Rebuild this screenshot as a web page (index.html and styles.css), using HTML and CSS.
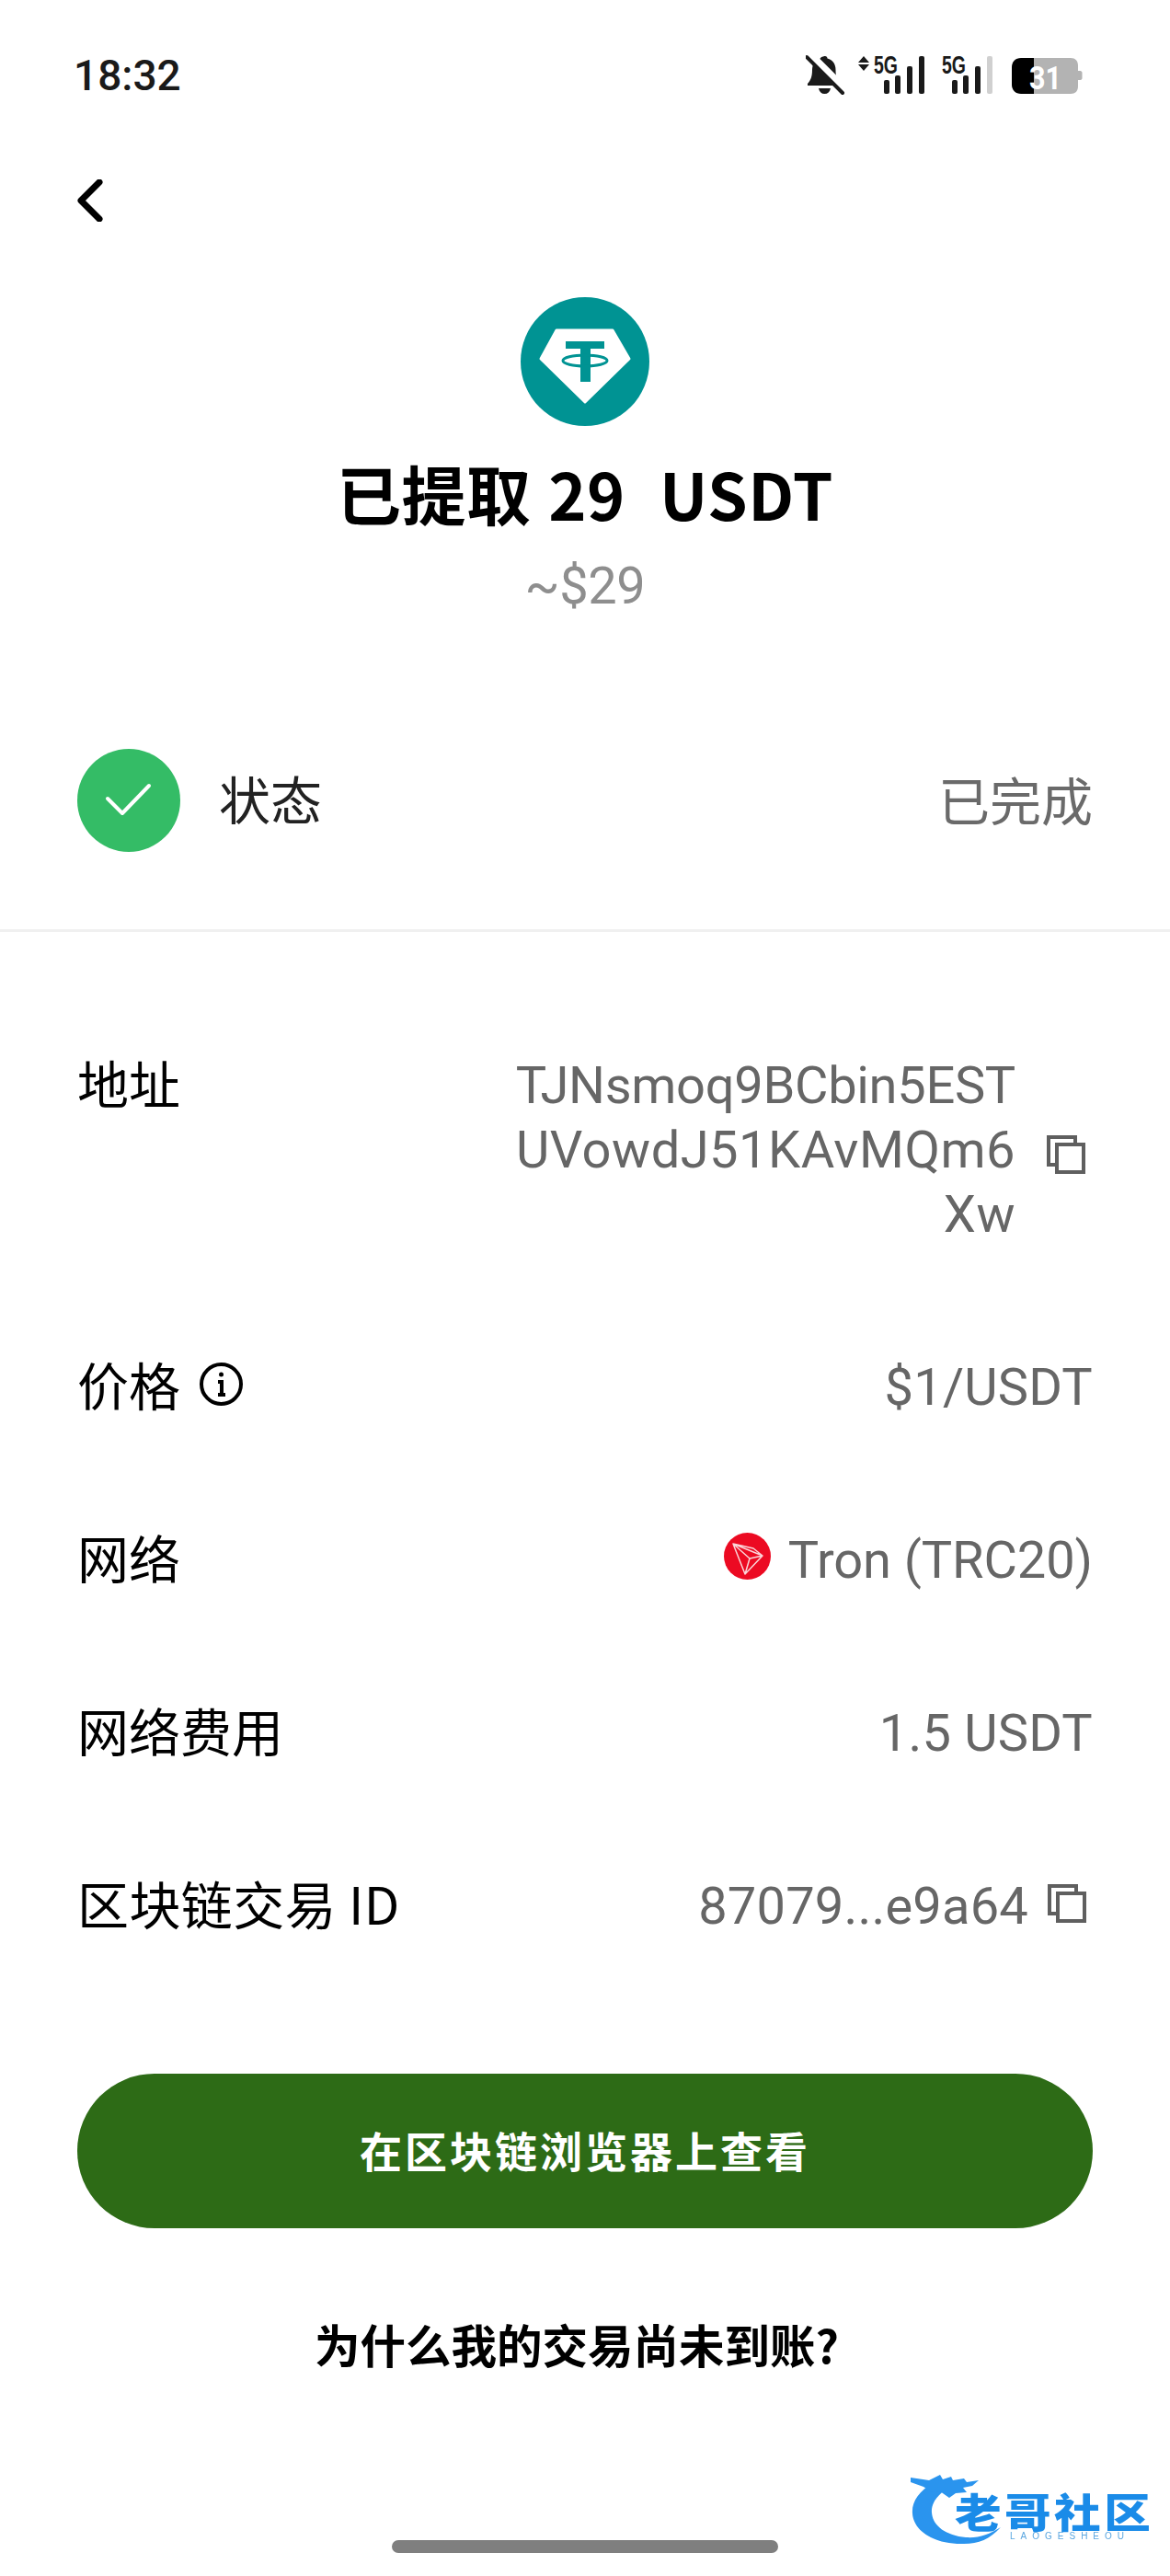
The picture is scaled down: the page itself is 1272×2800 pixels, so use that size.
FILE: index.html
```html
<!DOCTYPE html>
<html lang="zh">
<head>
<meta charset="utf-8">
<link rel="stylesheet" href="styles.css">
</head>
<body>
<div class="page">
  <header class="status-bar">
    <span class="time">18:32</span>
    <svg class="status-icons" width="301" height="50" viewBox="0 0 301 50">
      <path class="ic" d="M21 6c1.500 0 2.500 1 2.500 2.500 6 1.500 9 6.500 9 12.500 0 7 1.500 11 5 15v2H2v-2c3.500-4 5-8 5-15 0-6 3-11 9-12.500C16 7 19.500 6 21 6z"/>
      <path class="ic" d="M14 41h13c-1 4-3 6-6.500 6S15 45 14 41z"/>
      <path class="slash-bg" d="M1 7 40 46"/>
      <path class="slash" d="M1 7 40 46"/>
      <path class="ic" d="M63 6l6 7H57zM63 22l6-7H57z"/>
      <text class="tag" x="74" y="25" textLength="26" lengthAdjust="spacingAndGlyphs">5G</text>
      <rect class="ic" x="85" y="32" width="6" height="15" rx="2"/>
      <rect class="ic" x="97" y="27" width="6" height="20" rx="2"/>
      <rect class="ic" x="110" y="17" width="6" height="30" rx="2"/>
      <rect class="ic" x="123" y="6" width="6" height="41" rx="2"/>
      <text class="tag" x="148" y="25" textLength="26" lengthAdjust="spacingAndGlyphs">5G</text>
      <rect class="ic" x="159" y="32" width="6" height="15" rx="2"/>
      <rect class="ic" x="171" y="27" width="6" height="20" rx="2"/>
      <rect class="ic" x="184" y="17" width="6" height="30" rx="2"/>
      <rect class="off" x="197" y="6" width="6" height="41" rx="2"/>
      <path class="batt-bg" d="M236 8h52c5 0 8 3 8 8v6h2.500c1 0 2 1 2 2v6c0 1-1 2-2 2H296v7c0 5-3 8-8 8h-52z"/>
      <path class="batt-fill" d="M248 8v39h-14c-6 0-10-4-10-10V18c0-6 4-10 10-10z"/>
      <text class="batt-num" x="243" y="42" textLength="35" lengthAdjust="spacingAndGlyphs">31</text>
    </svg>
  </header>

  <nav class="nav">
    <svg class="back" width="28" height="46" viewBox="0 0 28 46"><path d="M24 3 4 23l20 20"/></svg>
  </nav>

  <section class="hero">
    <svg class="coin" width="140" height="140" viewBox="0 0 140 140">
      <circle class="coin-bg" cx="70" cy="70" r="70"/>
      <path class="gem" d="M39 36h61l18 31-48 47-48-47z"/>
      <path class="coin-t" d="M49 48h42v8H76v36H65V56H49z"/>
      <ellipse class="coin-ring" cx="70" cy="69" rx="24" ry="6"/>
    </svg>
    <h1 class="title">已提取 29  USDT</h1>
    <p class="fiat">~$29</p>
  </section>

  <section class="state">
    <div class="state-left">
      <svg class="check" width="112" height="112" viewBox="0 0 112 112">
        <circle class="check-bg" cx="56" cy="56" r="56"/>
        <path class="check-mark" d="M33 54l16 16 29-30"/>
      </svg>
      <span class="state-label">状态</span>
    </div>
    <span class="state-value">已完成</span>
  </section>

  <section class="details">
    <div class="row row-top">
      <span class="label">地址</span>
      <div class="copy-value">
        <span class="value address"><span class="addr-first">TJNsmoq9BCbin5EST</span><br>UVowdJ51KAvMQm6<br>Xw</span>
        <svg class="copy copy-addr" width="42" height="42" viewBox="0 0 42 42"><path d="M9 32H2V2h29v7"/><path d="M11 10h29v30H11z"/></svg>
      </div>
    </div>
    <div class="row">
      <span class="label label-info">价格
        <svg class="info" width="47" height="47" viewBox="0 0 47 47">
          <circle cx="23.500" cy="23.500" r="21.500"/>
          <path d="M20 21h4v14M20 35h8"/>
          <circle class="info-dot" cx="23.500" cy="13" r="2.500"/>
        </svg>
      </span>
      <span class="value">$1/USDT</span>
    </div>
    <div class="row">
      <span class="label">网络</span>
      <div class="network">
        <svg class="tron" width="51" height="51" viewBox="0 0 51 51">
          <circle class="tron-bg" cx="25.500" cy="25.500" r="25.500"/>
          <path class="tron-line" d="M10 12 42 25 23 45zM10 12 28 28 42 25M28 28 23 45M10 12 32 17 42 25"/>
        </svg>
        <span class="value value-tight">Tron (TRC20)</span>
      </div>
    </div>
    <div class="row">
      <span class="label">网络费用</span>
      <span class="value">1.5 USDT</span>
    </div>
    <div class="row">
      <span class="label label-id">区块链交易 ID</span>
      <div class="copy-value copy-tx">
        <span class="value">87079...e9a64</span>
        <svg class="copy copy-hash" width="42" height="42" viewBox="0 0 42 42"><path d="M9 32H2V2h29v7"/><path d="M11 10h29v30H11z"/></svg>
      </div>
    </div>
  </section>

  <div class="actions">
    <button class="primary" type="button">在区块链浏览器上查看</button>
    <a class="why">为什么我的交易尚未到账?</a>
  </div>

  <div class="home-bar"></div>

  <div class="watermark">
    <svg class="dragon" width="110" height="82" viewBox="0 0 110 82">
      <path class="dragon-body" d="M28 12C10 22 3 34 4 46c1 19 24 34 56 33 16 0 28-5 40-18-13 8-24 12-38 11-21-2-36-12-37-27-1-10 7-20 17-26z"/>
      <path class="dragon-head" d="M2 7l20 3 12-6 3 5 9-3 2 4 12-2 3 4 13-2-7 6-10 2 4 5-12 1-7 5-10-7-9 1-9-6-14-5z"/>
    </svg>
    <div class="wm-text">
      <span class="wm-cn">老哥社区</span>
      <span class="wm-en">LAOGESHEOU</span>
    </div>
  </div>
</div>
</body>
</html>
```
FILE: styles.css
```css
* { box-sizing: border-box; }
html, body { margin: 0; padding: 0; background: #fff; }
body { font-family: "Noto Sans CJK SC", "Noto Sans", sans-serif; color: #000; }
.page { position: relative; width: 1272px; height: 2800px; overflow: hidden; background: #fff; }

.status-bar { height: 164px; display: flex; justify-content: space-between; align-items: flex-start; padding: 55px 94px 0 80px; }
.time { font-family: Roboto, sans-serif; font-weight: 500; font-size: 46px; line-height: 54px; color: #1a1a1a; }
.status-icons { display: block; margin-right: 1px; }
.ic { fill: #1a1a1a; }
.off { fill: #d0d0d0; }
.slash { stroke: #1a1a1a; stroke-width: 4; stroke-linecap: round; fill: none; }
.slash-bg { stroke: #fff; stroke-width: 9; fill: none; transform: translate(3px, -3px); }
.tag { font-family: "Liberation Sans", sans-serif; font-weight: 700; font-size: 27px; fill: #1a1a1a; }
.batt-bg { fill: #b3b3b3; }
.batt-fill { fill: #000; }
.batt-num { font-family: Roboto, sans-serif; font-weight: 700; font-size: 35px; fill: #fff; }

.nav { height: 108px; padding-left: 84px; display: flex; align-items: center; }
.back { display: block; fill: none; stroke: #000; stroke-width: 7; stroke-linecap: round; stroke-linejoin: round; }

.hero { display: flex; flex-direction: column; align-items: center; padding-top: 51px; }
.coin { display: block; }
.coin-bg { fill: #009393; }
.gem { fill: #fff; stroke: #fff; stroke-width: 3; stroke-linejoin: round; }
.coin-t { fill: #009393; }
.coin-ring { fill: none; stroke: #009393; stroke-width: 3; }
.title { margin: 28px 0 3px; font-size: 70px; line-height: 90px; font-weight: 700; letter-spacing: 0.6px; word-spacing: 2px; white-space: pre; }
.fiat { margin: 18px 0 0; font-family: Roboto, sans-serif; font-weight: 400; font-size: 56px; line-height: 70px; letter-spacing: -0.4px; color: #8e8e8e; }

.state { margin-top: 142px; padding: 0 84px 84px; display: flex; justify-content: space-between; align-items: flex-start; border-bottom: 3px solid #f0f0f0; }
.state-left { display: flex; align-items: center; gap: 42px; }
.check { display: block; }
.check-bg { fill: #34bc66; }
.check-mark { fill: none; stroke: #fff; stroke-width: 4; stroke-linecap: round; stroke-linejoin: round; }
.state-label { font-size: 56px; line-height: 64px; padding-bottom: 6px; color: #222; }
.state-value { font-size: 56px; font-weight: 400; line-height: 108px; color: #6a6a6a; white-space: nowrap; }

.details { padding: 132px 84px 0; display: flex; flex-direction: column; gap: 118px; }
.row { display: flex; justify-content: space-between; align-items: center; min-height: 70px; }
.row-top { align-items: flex-start; }
.label { font-size: 56px; line-height: 62px; padding-bottom: 8px; color: #000; }
.label-id { letter-spacing: 0.4px; }
.label-info { display: flex; align-items: center; gap: 21px; }
.value { font-family: Roboto, sans-serif; font-weight: 400; font-size: 56px; line-height: 70px; letter-spacing: 0.2px; color: #666; white-space: nowrap; }
.value-tight { letter-spacing: -0.1px; }
.address { text-align: right; letter-spacing: 0.5px; }
.addr-first { letter-spacing: -0.3px; }
.copy-value { display: flex; align-items: center; gap: 34px; padding-right: 8px; }
.copy-tx { gap: 21px; padding-right: 7px; }
.copy { display: block; fill: none; stroke: #5f5f5f; stroke-width: 4; }
.copy-addr { margin-top: 10px; }
.copy-hash { margin-bottom: 6px; }
.info { display: block; fill: none; stroke: #000; stroke-width: 4; }
.info-dot { fill: #000; stroke: none; }
.network { display: flex; align-items: center; gap: 19px; }
.tron { display: block; margin-bottom: 10px; }
.tron-bg { fill: #ec0a22; }
.tron-line { fill: none; stroke: #fbd5d8; stroke-width: 1.500; stroke-linejoin: round; }

.actions { padding: 147px 84px 0; display: flex; flex-direction: column; align-items: center; }
.primary { width: 1104px; height: 168px; padding: 0 0 4px; border: 0; border-radius: 84px; background: #2d6b16; color: #fff; font-family: inherit; font-weight: 700; font-size: 46px; letter-spacing: 3px; }
.why { margin: 91px 18px 0 0; font-size: 49.500px; line-height: 70px; font-weight: 700; color: #000; }

.home-bar { position: absolute; left: 426px; top: 2761px; width: 420px; height: 14px; border-radius: 7px; background: #7f7f7f; }

.watermark { position: absolute; left: 988px; top: 2686px; width: 270px; height: 84px; filter: blur(0.7px); }
.dragon { position: absolute; left: 0; top: 0; }
.dragon-body, .dragon-head { fill: #2a94ee; }
.wm-text { position: absolute; left: 50px; top: 20px; display: flex; flex-direction: column; align-items: flex-start; }
.wm-cn { font-size: 44px; line-height: 46px; font-weight: 900; letter-spacing: 3px; color: #1a8be8; white-space: nowrap; transform: scaleX(1.15); transform-origin: left center; }
.wm-en { font-family: "Liberation Sans", sans-serif; font-size: 10px; line-height: 10px; letter-spacing: 6px; color: #5aa6e0; margin-left: 60px; white-space: nowrap; }
```
